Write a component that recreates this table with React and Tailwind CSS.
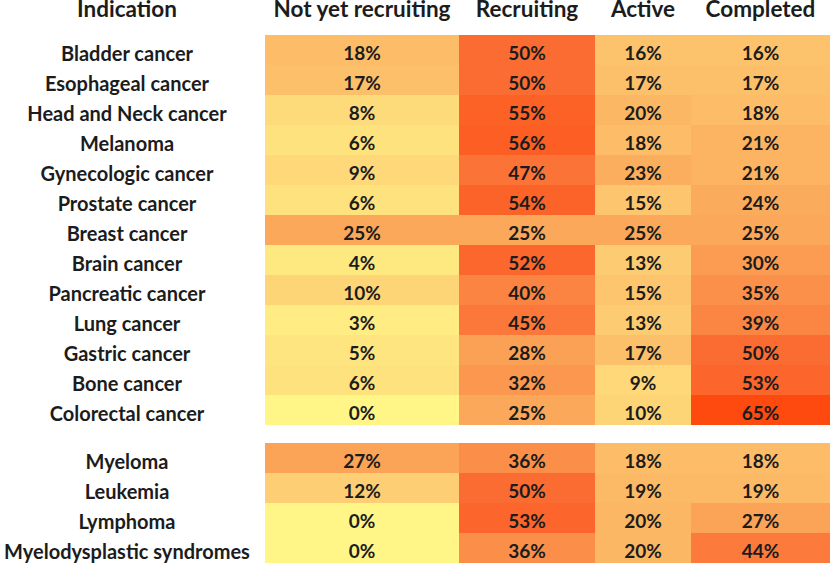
import React from "react";

const groups = [
  [
    ["Bladder cancer", 18, 50, 16, 16],
    ["Esophageal cancer", 17, 50, 17, 17],
    ["Head and Neck cancer", 8, 55, 20, 18],
    ["Melanoma", 6, 56, 18, 21],
    ["Gynecologic cancer", 9, 47, 23, 21],
    ["Prostate cancer", 6, 54, 15, 24],
    ["Breast cancer", 25, 25, 25, 25],
    ["Brain cancer", 4, 52, 13, 30],
    ["Pancreatic cancer", 10, 40, 15, 35],
    ["Lung cancer", 3, 45, 13, 39],
    ["Gastric cancer", 5, 28, 17, 50],
    ["Bone cancer", 6, 32, 9, 53],
    ["Colorectal cancer", 0, 25, 10, 65],
  ],
  [
    ["Myeloma", 27, 36, 18, 18],
    ["Leukemia", 12, 50, 19, 19],
    ["Lymphoma", 0, 53, 20, 27],
    ["Myelodysplastic syndromes", 0, 36, 20, 44],
  ],
];

const stops = [
  [0, [255, 246, 135]],
  [12, [253, 206, 116]],
  [25, [251, 168, 90]],
  [50, [251, 108, 50]],
  [65, [255, 74, 15]],
];

function color(v) {
  for (let i = 0; i < stops.length - 1; i++) {
    const [a, ca] = stops[i];
    const [b, cb] = stops[i + 1];
    if (v <= b) {
      const t = (v - a) / (b - a);
      const c = ca.map((x, k) => Math.round(x + (cb[k] - x) * t));
      return `rgb(${c[0]},${c[1]},${c[2]})`;
    }
  }
  return "rgb(255,74,15)";
}

const cols = "grid grid-cols-[265px_194px_136px_96px_139px]";

export default function App() {
  return (
    <div
      className="w-[830px] h-[564px] bg-white text-[#1c1c1c] font-bold overflow-hidden"
      style={{ fontFamily: "Lato, 'Open Sans', sans-serif" }}
    >
      <div className={`${cols} h-[35px] text-[22.5px] leading-[18px] items-start`}>
        <div className="text-center pr-[11px]">Indication</div>
        <div className="text-center">Not yet recruiting</div>
        <div className="text-center">Recruiting</div>
        <div className="text-center">Active</div>
        <div className="text-center">Completed</div>
      </div>
      {groups.map((g, gi) => (
        <div key={gi} className={gi > 0 ? "mt-[18px]" : ""}>
          {g.map((r) => (
            <div key={r[0]} className={`${cols} h-[30px]`}>
              <div className="flex items-center justify-center pr-[11px] pt-[6px] text-[20px] leading-[24px]">
                {r[0]}
              </div>
              {r.slice(1).map((v, i) => (
                <div
                  key={i}
                  className="flex items-center justify-center pt-[6px] text-[19px] leading-[24px]"
                  style={{ backgroundColor: color(v) }}
                >
                  {v}%
                </div>
              ))}
            </div>
          ))}
        </div>
      ))}
    </div>
  );
}
